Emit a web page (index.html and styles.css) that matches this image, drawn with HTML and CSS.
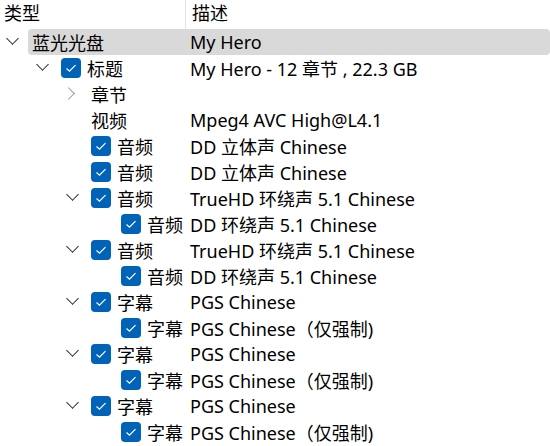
FILE: index.html
```html
<!DOCTYPE html>
<html lang="zh-CN">
<head>
    <meta charset="UTF-8">
    <title>蓝光光盘</title>
    <link rel="stylesheet" href="styles.css">
</head>
<body>
    <div class="tree">
        <div class="header">
            <div class="col-type">类型</div>
            <div class="col-desc">描述</div>
        </div>

        <div class="row selected">
            <div class="cell l0"><span class="tog down"></span><span class="name">蓝光光盘</span></div>
            <div class="desc">My Hero</div>
        </div>
        <div class="row">
            <div class="cell l1"><span class="tog down"></span><span class="chk"></span><span class="name">标题</span></div>
            <div class="desc">My Hero - 12 章节 , 22.3 GB</div>
        </div>
        <div class="row">
            <div class="cell l2"><span class="tog right"></span><span class="name">章节</span></div>
            <div class="desc"></div>
        </div>
        <div class="row">
            <div class="cell l2"><span class="tog"></span><span class="name">视频</span></div>
            <div class="desc">Mpeg4 AVC High@L4.1</div>
        </div>
        <div class="row">
            <div class="cell l2"><span class="tog"></span><span class="chk"></span><span class="name">音频</span></div>
            <div class="desc">DD 立体声 Chinese</div>
        </div>
        <div class="row">
            <div class="cell l2"><span class="tog"></span><span class="chk"></span><span class="name">音频</span></div>
            <div class="desc">DD 立体声 Chinese</div>
        </div>
        <div class="row">
            <div class="cell l2"><span class="tog down"></span><span class="chk"></span><span class="name">音频</span></div>
            <div class="desc">TrueHD 环绕声 5.1 Chinese</div>
        </div>
        <div class="row">
            <div class="cell l3"><span class="tog"></span><span class="chk"></span><span class="name">音频</span></div>
            <div class="desc">DD 环绕声 5.1 Chinese</div>
        </div>
        <div class="row">
            <div class="cell l2"><span class="tog down"></span><span class="chk"></span><span class="name">音频</span></div>
            <div class="desc">TrueHD 环绕声 5.1 Chinese</div>
        </div>
        <div class="row">
            <div class="cell l3"><span class="tog"></span><span class="chk"></span><span class="name">音频</span></div>
            <div class="desc">DD 环绕声 5.1 Chinese</div>
        </div>
        <div class="row">
            <div class="cell l2"><span class="tog down"></span><span class="chk"></span><span class="name">字幕</span></div>
            <div class="desc">PGS Chinese</div>
        </div>
        <div class="row">
            <div class="cell l3"><span class="tog"></span><span class="chk"></span><span class="name">字幕</span></div>
            <div class="desc">PGS Chinese（仅强制)</div>
        </div>
        <div class="row">
            <div class="cell l2"><span class="tog down"></span><span class="chk"></span><span class="name">字幕</span></div>
            <div class="desc">PGS Chinese</div>
        </div>
        <div class="row">
            <div class="cell l3"><span class="tog"></span><span class="chk"></span><span class="name">字幕</span></div>
            <div class="desc">PGS Chinese（仅强制)</div>
        </div>
        <div class="row">
            <div class="cell l2"><span class="tog down"></span><span class="chk"></span><span class="name">字幕</span></div>
            <div class="desc">PGS Chinese</div>
        </div>
        <div class="row">
            <div class="cell l3"><span class="tog"></span><span class="chk"></span><span class="name">字幕</span></div>
            <div class="desc">PGS Chinese（仅强制)</div>
        </div>
    </div>
</body>
</html>
```

FILE: styles.css
```css
body {
    margin: 0;
    background: #fff;
    font-family: "Noto Sans", "Noto Sans CJK SC", sans-serif;
    font-size: 18px;
    color: #000;
    overflow: hidden;
}
.tree {
    width: 550px;
}
.header {
    display: flex;
    height: 29px;
    align-items: center;
}
.col-type {
    width: 181px;
    padding-left: 4px;
    border-right: 1px solid #e3e3e3;
    height: 29px;
    line-height: 27px;
}
.col-desc {
    padding-left: 6px;
    line-height: 27px;
    height: 29px;
}
.row {
    position: relative;
    display: flex;
    height: 26px;
    align-items: center;
    white-space: nowrap;
}
.row.selected::before {
    content: "";
    position: absolute;
    left: 28px;
    right: 0;
    top: 0;
    bottom: 0;
    background: #d9d9d9;
    border-radius: 4px;
    z-index: -1;
}
.cell {
    width: 190px;
    flex: none;
    display: flex;
    align-items: center;
    box-sizing: border-box;
}
.l0 { padding-left: 0; }
.l1 { padding-left: 30px; }
.l2 { padding-left: 60px; }
.l3 { padding-left: 90px; }
.l0 .name { margin-left: 1px; }
.tog {
    width: 31px;
    height: 26px;
    flex: none;
    position: relative;
}
.tog.down::after {
    content: "";
    position: absolute;
    left: 8px;
    top: 5px;
    width: 8px;
    height: 8px;
    border-right: 1.5px solid #2b2b2b;
    border-bottom: 1.5px solid #2b2b2b;
    transform: rotate(45deg);
}
.tog.right::after {
    content: "";
    position: absolute;
    left: 4px;
    top: 8px;
    width: 8px;
    height: 8px;
    border-right: 1.5px solid #9a9a9a;
    border-bottom: 1.5px solid #9a9a9a;
    transform: rotate(-45deg);
}
.chk {
    width: 20px;
    height: 20px;
    flex: none;
    margin-right: 6px;
    border-radius: 4px;
    background: #0063b8 url("data:image/svg+xml,%3Csvg xmlns='http://www.w3.org/2000/svg' width='20' height='20'%3E%3Cpath d='M5.5 10.5 L8.5 13.2 L14.5 7.2' fill='none' stroke='%23fff' stroke-width='1.2'/%3E%3C/svg%3E") no-repeat center;
}
.desc {
    padding-left: 0;
}
```
